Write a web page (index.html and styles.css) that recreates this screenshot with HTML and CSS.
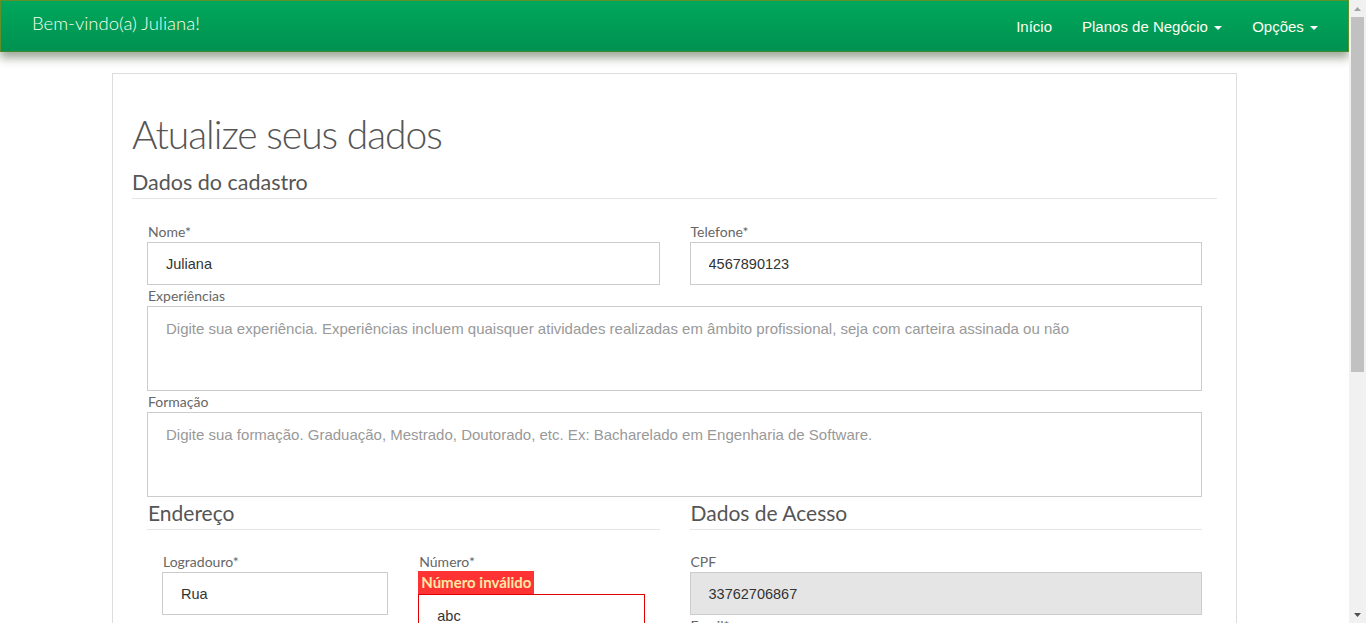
FILE: index.html
```html
<!DOCTYPE html>
<html lang="pt-BR">
<head>
<meta charset="utf-8">
<title>Atualize seus dados</title>
<link rel="stylesheet" href="styles.css">
</head>
<body>
<div class="window">
  <div class="page">
    <nav class="navbar">
      <a class="brand" href="#">Bem-vindo(a) Juliana!</a>
      <ul class="nav">
        <li><a href="#">Início</a></li>
        <li><a href="#">Planos de Negócio <span class="caret"></span></a></li>
        <li><a href="#">Opções <span class="caret"></span></a></li>
      </ul>
    </nav>

    <main class="panel">
      <h1 class="title">Atualize seus dados</h1>
      <h3 class="section">Dados do cadastro</h3>

      <div class="fields">
        <div class="row">
          <div class="col">
            <label class="lbl">Nome*</label>
            <input class="input" type="text" value="Juliana">
          </div>
          <div class="col">
            <label class="lbl">Telefone*</label>
            <input class="input" type="text" value="4567890123">
          </div>
        </div>
        <label class="lbl">Experiências</label>
        <textarea class="input area" placeholder="Digite sua experiência. Experiências incluem quaisquer atividades realizadas em âmbito profissional, seja com carteira assinada ou não"></textarea>
        <label class="lbl">Formação</label>
        <textarea class="input area" placeholder="Digite sua formação. Graduação, Mestrado, Doutorado, etc. Ex: Bacharelado em Engenharia de Software."></textarea>

        <div class="row">
          <div class="col">
            <h4 class="subsection">Endereço</h4>
            <div class="row inner first">
              <div class="col">
                <label class="lbl">Logradouro*</label>
                <input class="input" type="text" value="Rua">
              </div>
              <div class="col">
                <label class="lbl">Número*</label>
                <span class="error">Número inválido</span>
                <input class="input invalid" type="text" value="abc">
              </div>
            </div>
            <div class="row inner">
              <div class="col">
                <label class="lbl">Complemento</label>
                <input class="input" type="text">
              </div>
              <div class="col">
                <label class="lbl">Bairro*</label>
                <input class="input" type="text">
              </div>
            </div>
            <div class="row inner">
              <div class="col">
                <label class="lbl">Cidade*</label>
                <input class="input" type="text">
              </div>
              <div class="col">
                <label class="lbl">Estado*</label>
                <input class="input" type="text">
              </div>
            </div>
          </div>
          <div class="col">
            <h4 class="subsection">Dados de Acesso</h4>
            <div class="access">
              <label class="lbl">CPF</label>
              <input class="input" type="text" value="33762706867" disabled>
              <label class="lbl">Email*</label>
              <input class="input" type="text" value="juliana@email.com">
              <label class="lbl">Senha</label>
              <input class="input" type="password">
              <label class="lbl">Confirmar senha</label>
              <input class="input" type="password">
            </div>
          </div>
        </div>
        <div class="actions">
          <button class="btn" type="button">Salvar</button>
        </div>
      </div>
    </main>
  </div>

  <div class="scrollbar" aria-hidden="true">
    <div class="sb-btn">
      <svg width="7" height="4" viewBox="0 0 7 4"><path d="M0 4L3.5 0L7 4z" fill="#a3a3a3"/></svg>
    </div>
    <div class="sb-track"><div class="sb-thumb"></div></div>
    <div class="sb-btn">
      <svg width="7" height="4" viewBox="0 0 7 4"><path d="M0 0L3.5 4L7 0z" fill="#505050"/></svg>
    </div>
  </div>
</div>
</body>
</html>
```

FILE: styles.css
```css
html, body {
  margin: 0;
  height: 100%;
  overflow: hidden;
}
body {
  background: #fff;
  font-family: Lato, "Liberation Sans", sans-serif;
  color: #555;
}

.window {
  display: flex;
  height: 100vh;
}
.page {
  flex: 1 1 auto;
  min-width: 0;
  overflow: hidden;
}

/* fake browser scrollbar */
.scrollbar {
  width: 17px;
  flex: 0 0 17px;
  display: flex;
  flex-direction: column;
  background: #f1f1f1;
}
.sb-btn {
  height: 17px;
  flex: 0 0 17px;
  display: flex;
  align-items: center;
  justify-content: center;
}
.sb-btn svg { display: block; }
.sb-track {
  flex: 1 1 auto;
}
.sb-thumb {
  margin: 0 2px;
  height: 355px;
  background: #c1c1c1;
}

/* navbar */
.navbar {
  display: flex;
  align-items: flex-start;
  justify-content: space-between;
  height: 52px;
  box-sizing: border-box;
  border: 1px solid #5f902a;
  border-bottom-color: #3f8a35;
  background: linear-gradient(#00a85d, #009150);
  box-shadow: 0 6px 9px rgba(40, 60, 25, 0.45);
  padding: 0 15px 0 31px;
  position: relative;
  z-index: 2;
}
.brand {
  color: #f4fff0;
  text-decoration: none;
  font-family: Lato, sans-serif;
  font-weight: 300;
  font-size: 18.5px;
  line-height: 20px;
  margin-top: 12px;
}
.nav {
  list-style: none;
  margin: 0;
  padding: 0;
  display: flex;
}
.nav a {
  display: block;
  padding: 0 15px;
  color: #fffdf0;
  text-decoration: none;
  font-family: "Liberation Sans", Arial, sans-serif;
  font-size: 15px;
  line-height: 20px;
  margin-top: 16px;
}
.caret {
  display: inline-block;
  width: 0;
  height: 0;
  margin-left: 2px;
  vertical-align: middle;
  border-top: 4px solid #fff;
  border-left: 4px solid transparent;
  border-right: 4px solid transparent;
}

/* panel */
.panel {
  width: 1125px;
  box-sizing: border-box;
  margin: 21px 0 40px 112px;
  border: 1px solid #ddd;
  padding: 0 19px 30px;
  min-height: 900px;
}
.title {
  margin: 35px 0 0;
  font-family: Lato, sans-serif;
  font-weight: 300;
  font-size: 39px;
  letter-spacing: -1px;
  line-height: 50px;
  color: #555;
}
.section {
  margin: 11px 0 0;
  font-family: Lato, sans-serif;
  font-weight: 400;
  font-size: 21.5px;
  line-height: 24px;
  padding-bottom: 4px;
  border-bottom: 1px solid #e5e5e5;
  color: #555;
}
.fields {
  padding: 22px 15px 0;
}
.row {
  display: flex;
  gap: 30px;
}
.row.inner {
  padding: 0 15px;
}
.col {
  flex: 1 1 0;
  min-width: 0;
  display: flex;
  flex-direction: column;
}
.lbl {
  display: block;
  font-family: Lato, sans-serif;
  font-size: 14px;
  line-height: 21px;
  color: #666;
  padding-left: 1px;
}
.input {
  display: block;
  width: 100%;
  box-sizing: border-box;
  height: 43px;
  margin: 0;
  border: 1px solid #ccc;
  border-radius: 0;
  padding: 0 18px;
  font-family: "Liberation Sans", Arial, sans-serif;
  font-size: 14.5px;
  color: #333;
  background: #fff;
  outline: none;
}
.input:disabled {
  background: #e5e5e5;
  color: #333;
}
.input.invalid {
  border-color: #e00000;
}
.area {
  height: 85px;
  padding: 13px 18px;
  resize: none;
  line-height: 18px;
  font-size: 15px;
}
.input::placeholder { color: #999; }

.subsection {
  margin: 2px 0 0;
  font-family: Lato, sans-serif;
  font-weight: 400;
  font-size: 21px;
  line-height: 28px;
  padding: 0 0 2px 1px;
  border-bottom: 1px solid #e5e5e5;
  color: #555;
}
.row.inner.first,
.access {
  margin-top: 21px;
}
.access {
  display: flex;
  flex-direction: column;
}
.error {
  align-self: flex-start;
  margin-top: -1px;
  background: #ff3333;
  color: #ffe8a6;
  font-family: Lato, sans-serif;
  font-weight: 700;
  font-size: 15px;
  line-height: 23px;
  padding: 0 3px;
}
.actions {
  padding-top: 30px;
}
.btn {
  font-family: "Liberation Sans", Arial, sans-serif;
  font-size: 15px;
  color: #fff;
  background: #009d55;
  border: 1px solid #008a4a;
  padding: 10px 24px;
}
```
